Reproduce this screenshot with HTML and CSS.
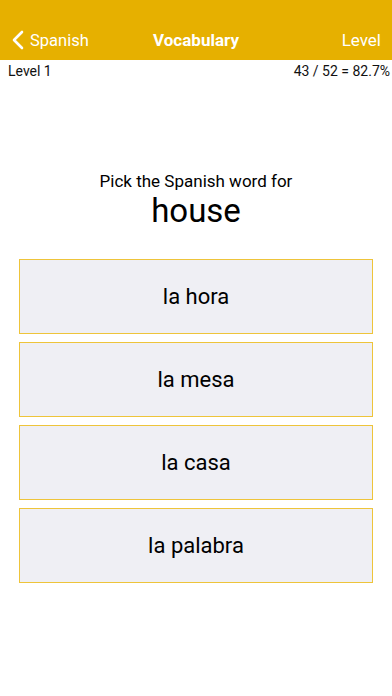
FILE: index.html
```html
<!DOCTYPE html>
<html lang="en">
<head>
  <meta charset="UTF-8">
  <meta name="viewport" content="width=device-width, initial-scale=1.0">
  <title>Vocabulary</title>
  <link rel="stylesheet" href="styles.css">
</head>
<body>
  <div class="navbar">
    <div class="nav-back">
      <svg class="chevron" width="12" height="20" viewBox="0 0 12 20">
        <path d="M10 2 L2 10 L10 18" fill="none" stroke="#fff" stroke-width="2.6" stroke-linecap="round" stroke-linejoin="round"/>
      </svg>
      <span>Spanish</span>
    </div>
    <div class="nav-title">Vocabulary</div>
    <div class="nav-right">Level</div>
  </div>
  <div class="status">
    <span>Level 1</span>
    <span>43 / 52 = 82.7%</span>
  </div>

  <div class="question">
    <div class="prompt">Pick the Spanish word for</div>
    <div class="word">house</div>
  </div>

  <div class="choices">
    <div class="choice">la hora</div>
    <div class="choice">la mesa</div>
    <div class="choice">la casa</div>
    <div class="choice">la palabra</div>
  </div>
</body>
</html>
```

FILE: styles.css
```css
body {
  font-family: Roboto, "Liberation Sans", sans-serif;
  margin: 0;
  padding: 0;
  background: #fff;
  color: #000;
}
.navbar {
  background: #e6b000;
  height: 60px;
  padding: 20px 12px 0 12px;
  box-sizing: border-box;
  display: flex;
  align-items: center;
  justify-content: space-between;
  position: relative;
  color: #fff;
  font-size: 17px;
}
.nav-back {
  display: flex;
  align-items: center;
  gap: 6px;
}
.nav-back span {
  font-size: 16.5px;
}
.chevron {
  display: block;
}
.nav-title {
  position: absolute;
  left: 0;
  right: 0;
  top: 20px;
  bottom: 0;
  display: flex;
  align-items: center;
  justify-content: center;
  font-weight: bold;
  pointer-events: none;
}
.nav-right {
  margin-right: -1px;
}
.status {
  display: flex;
  justify-content: space-between;
  padding: 3px 2px 0 8px;
  font-size: 14px;
  color: #111;
}
.question {
  margin-top: 91px;
  text-align: center;
}
.prompt {
  font-size: 17px;
  line-height: 22px;
}
.word {
  font-size: 33px;
  line-height: 38px;
}
.choices {
  margin: 29px 19px 0 19px;
  display: flex;
  flex-direction: column;
  gap: 8px;
}
.choice {
  height: 75px;
  box-sizing: border-box;
  border: 1px solid #eec43a;
  background: #efeff4;
  display: flex;
  align-items: center;
  justify-content: center;
  font-size: 22px;
}
```
